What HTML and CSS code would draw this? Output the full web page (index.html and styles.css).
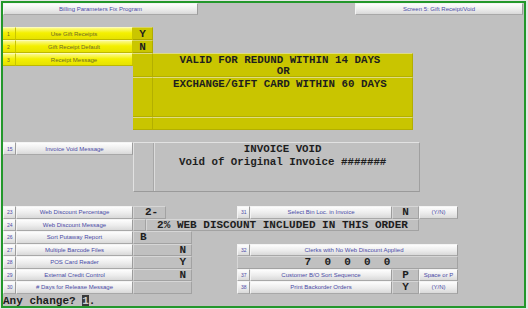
FILE: index.html
```html
<!DOCTYPE html>
<html>
<head>
<meta charset="utf-8">
<link rel="stylesheet" href="styles.css">
</head>
<body>
<div class="screen">
  <div class="titles">
    <div class="btn title-left">Billing Parameters Fix Program</div>
    <div class="btn title-right">Screen 5: Gift Receipt/Void</div>
  </div>

  <div class="sec-a">
    <div class="ynum c1">1</div><div class="ylabel">Use Gift Receipts</div><div class="oval">Y</div>
    <div class="ynum c1">2</div><div class="ylabel">Gift Receipt Default</div><div class="oval">N</div>
    <div class="ynum c1 top">3</div><div class="ylabel top">Receipt Message</div>
    <div class="bigbox">
      <div class="bb-side"></div><div class="bb-text"> VALID FOR REDUND WITHIN 14 DAYS
                OR</div>
      <div class="bb-side"></div><div class="bb-text">EXCHANGE/GIFT CARD WITHIN 60 DAYS</div>
      <div class="bb-side"></div><div class="bb-text"></div>
    </div>
  </div>

  <div class="sec-b">
    <div class="num top">15</div><div class="btn top">Invoice Void Message</div>
    <div class="voidbox">
      <div class="vb-side"></div>
      <div class="vb-text">          INVOICE VOID
Void of Original Invoice #######</div>
    </div>
  </div>

  <div class="sec-c">
    <div class="num c1">23</div><div class="btn">Web Discount Percentage</div>
    <div class="val c3-5 pl">2-</div>
    <div class="num c7">31</div><div class="btn">Select Bin Loc. in Invoice</div>
    <div class="val ctr">N</div><div class="btn">(Y/N)</div>

    <div class="num c1">24</div><div class="btn">Web Discount Message</div>
    <div class="val"></div>
    <div class="val c4-10 ctr">2% WEB DISCOUNT INCLUDED IN THIS ORDER</div>

    <div class="num c1">26</div><div class="btn">Sort Putaway Report</div>
    <div class="val c3-6 pb">B</div>

    <div class="num c1">27</div><div class="btn">Multiple Barcode Files</div>
    <div class="val c3-6 rt">N</div>
    <div class="num c7">32</div><div class="btn c8-11">Clerks with No Web Discount Applied</div>

    <div class="num c1">28</div><div class="btn">POS Card Reader</div>
    <div class="val c3-6 rt">Y</div>
    <div class="val c7-11 ctr">7  0  0  0  0</div>

    <div class="num c1">29</div><div class="btn">External Credit Control</div>
    <div class="val c3-6 rt">N</div>
    <div class="num c7">37</div><div class="btn">Customer B/O Sort Sequence</div>
    <div class="val ctr">P</div><div class="btn">Space or P</div>

    <div class="num c1">30</div><div class="btn"># Days for Release Message</div>
    <div class="val c3-6"></div>
    <div class="num c7">38</div><div class="btn">Print Backorder Orders</div>
    <div class="val ctr">Y</div><div class="btn">(Y/N)</div>
  </div>

  <div class="prompt">Any change? <span class="cursor">1</span>.</div>
</div>
</body>
</html>
```

FILE: styles.css
```css
html, body {
  margin: 0;
  padding: 0;
  background: #e6e6e6;
}

.screen {
  width: 525px;
  height: 307px;
  margin: 1px;
  box-sizing: border-box;
  border: 2px solid #23972b;
  background: #c0c0c0;
  overflow: hidden;
}

.btn, .num, .ynum, .ylabel {
  box-sizing: border-box;
  display: flex;
  align-items: center;
  justify-content: center;
  font-family: "Liberation Sans", Arial, sans-serif;
  font-size: 6px;
  white-space: nowrap;
  overflow: hidden;
}

.btn, .num {
  background: linear-gradient(#fdfdfd, #ececec 55%, #d9d9d9);
  color: #4a4aa6;
  border-top: 1px solid #f4f4f4;
  border-left: 1px solid #f4f4f4;
  border-right: 1px solid #9c9c9c;
  border-bottom: 1px solid #a8a8a8;
}

.num {
  justify-content: flex-start;
  padding-left: 3px;
  font-size: 5px;
}

.titles {
  display: flex;
  justify-content: space-between;
  height: 12px;
}

.title-left { width: 195px; }
.title-right { width: 168px; margin-right: 1px; }

/* Section A — yellow */
.sec-a {
  margin-top: 12px;
  display: grid;
  grid-template-columns: 13px 117px 20px 260px;
  grid-template-rows: 13px 13px 77px;
}

.ynum, .ylabel {
  background: linear-gradient(#fbf98a, #f4f000 45%, #e6e200);
  color: #6d6a2c;
  border-top: 1px solid #fdfcb8;
  border-right: 1px solid #c9c500;
  border-bottom: 1px solid #bdb900;
}

.ynum {
  justify-content: flex-start;
  padding-left: 4px;
  font-size: 5px;
}

.top {
  align-self: start;
  height: 13px;
}

.oval {
  box-sizing: border-box;
  background: #cac600;
  border-top: 1px solid #d8d460;
  border-right: 1px solid #b0ac00;
  border-bottom: 1px solid #aaa600;
  font-family: "Liberation Mono", "Courier New", monospace;
  font-weight: bold;
  font-size: 11px;
  color: #1e1e1e;
  display: flex;
  align-items: center;
  justify-content: center;
}

.bigbox {
  grid-column: 3 / 5;
  grid-row: 3;
  display: grid;
  grid-template-columns: 20px 260px;
  grid-template-rows: 24px 40px 13px;
  background: #c9c500;
  border-bottom: 1px solid #a8a400;
  box-sizing: border-box;
}

.bb-side, .bb-text {
  box-sizing: border-box;
  border-top: 1px solid #dedb84;
  border-bottom: 1px solid #b3af00;
}

.bb-side {
  border-right: 1px solid #b3af00;
}

.bb-text {
  border-right: 1px solid #b3af00;
  font-family: "Liberation Mono", "Courier New", monospace;
  font-weight: bold;
  font-size: 10.8px;
  line-height: 11px;
  padding-top: 1px;
  padding-left: 20px;
  white-space: pre;
  color: #1e1e1e;
}

/* Section B — invoice void */
.sec-b {
  margin-top: 12px;
  display: grid;
  grid-template-columns: 13px 117px 287px;
  grid-template-rows: 50px;
}

.voidbox {
  display: grid;
  grid-template-columns: 20px 1fr;
  box-sizing: border-box;
  border-top: 1px solid #e2e2e2;
  border-left: 1px solid #e2e2e2;
  border-right: 1px solid #a0a0a0;
  border-bottom: 1px solid #9a9a9a;
}

.vb-side {
  border-right: 1px solid #a8a8a8;
  box-shadow: 1px 0 0 #dcdcdc;
}

.vb-text {
  font-family: "Liberation Mono", "Courier New", monospace;
  font-weight: bold;
  font-size: 10.8px;
  line-height: 13px;
  padding-left: 25px;
  white-space: pre;
  color: #1e1e1e;
}

/* Section C */
.sec-c {
  margin-top: 14px;
  display: grid;
  grid-template-columns: 13px 117px 13px 20px 26px 45px 13px 142px 27px 39px;
  grid-auto-rows: 12.5px;
}

.val {
  box-sizing: border-box;
  background: #c0c0c0;
  border-top: 1px solid #d6d6d6;
  border-left: 1px solid #d6d6d6;
  border-right: 1px solid #a2a2a2;
  border-bottom: 1px solid #a2a2a2;
  font-family: "Liberation Mono", "Courier New", monospace;
  font-weight: bold;
  font-size: 11px;
  color: #1e1e1e;
  display: flex;
  align-items: center;
  white-space: pre;
  overflow: hidden;
}

.ctr { justify-content: center; }
.rt { justify-content: flex-end; padding-right: 5px; }
.pl { padding-left: 11px; }
.pb { padding-left: 6px; }

.c1 { grid-column: 1; }
.c3-5 { grid-column: 3 / 5; }
.c3-6 { grid-column: 3 / 6; }
.c4-10 { grid-column: 4 / 10; }
.c7 { grid-column: 7; }
.c7-11 { grid-column: 7 / 11; }
.c8-11 { grid-column: 8 / 11; }

.prompt {
  margin-top: 1px;
  font-family: "Liberation Mono", "Courier New", monospace;
  font-weight: bold;
  font-size: 11px;
  line-height: 12px;
  color: #1e1e1e;
  white-space: pre;
}

.cursor {
  background: #3a3a3a;
  color: #cfcfcf;
}
```
